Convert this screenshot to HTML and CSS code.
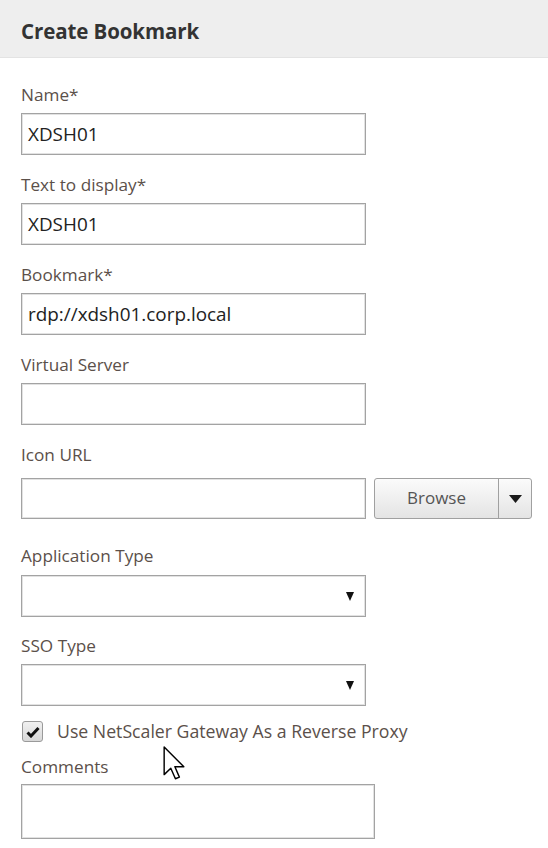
FILE: index.html
```html
<!DOCTYPE html>
<html>
<head>
<meta charset="utf-8">
<link rel="stylesheet" href="styles.css">
</head>
<body>
<div class="panel">
  <div class="header"><h1 class="title">Create Bookmark</h1></div>
  <div class="form">
    <div class="field">
      <div class="label">Name*</div>
      <div class="input">XDSH01</div>
    </div>
    <div class="field">
      <div class="label">Text to display*</div>
      <div class="input">XDSH01</div>
    </div>
    <div class="field">
      <div class="label">Bookmark*</div>
      <div class="input">rdp://xdsh01.corp.local</div>
    </div>
    <div class="field">
      <div class="label">Virtual Server</div>
      <div class="input"></div>
    </div>
    <div class="field field-icon">
      <div class="label label-wide">Icon URL</div>
      <div class="row">
        <div class="input"></div>
        <div class="split-btn">
          <span class="btn-main">Browse</span>
          <span class="btn-arrow"><svg width="13" height="8" viewBox="0 0 13 8"><polygon points="0,0 13,0 6.5,8" fill="#1a1a1a"/></svg></span>
        </div>
      </div>
    </div>
    <div class="field field-app">
      <div class="label">Application Type</div>
      <div class="input select"><svg class="caret" width="8" height="9" viewBox="0 0 8 9"><polygon points="0,0 8,0 4,9" fill="#111"/></svg></div>
    </div>
    <div class="field field-sso">
      <div class="label">SSO Type</div>
      <div class="input select"><svg class="caret" width="8" height="9" viewBox="0 0 8 9"><polygon points="0,0 8,0 4,9" fill="#111"/></svg></div>
    </div>
    <div class="check-row">
      <span class="checkbox"><svg width="14" height="12" viewBox="0 0 14 12"><path d="M1.5 6.5 L5 10 L12.5 2" fill="none" stroke="#111" stroke-width="3"/></svg></span>
      <span class="check-label">Use NetScaler Gateway As a Reverse Proxy</span>
    </div>
    <div class="field field-comments">
      <div class="label">Comments</div>
      <div class="input textarea"></div>
    </div>
  </div>
  <svg class="cursor" width="22" height="34" viewBox="0 0 12 19"><path d="M0.5 0.5 L0.5 16 L4.2 12.4 L6.8 18.3 L9 17.4 L6.5 11.6 L11.5 11.6 Z" fill="#fff" stroke="#000" stroke-width="0.8" stroke-linejoin="round"/></svg>
</div>
</body>
</html>
```
FILE: styles.css
```css
* { box-sizing: border-box; }
html, body { margin: 0; padding: 0; background: #fff; }
body { font-family: "Open Sans", "Noto Sans", sans-serif; width: 548px; height: 848px; overflow: hidden; }
.panel { position: relative; height: 848px; }
.header {
  height: 58px;
  background: #eeeeee;
  border-bottom: 1px solid #e3e3e3;
  display: flex;
  align-items: center;
  padding-left: 21px;
}
.title {
  margin: 0;
  font-size: 20.5px;
  font-weight: 700;
  color: #333;
  letter-spacing: -0.1px;
  padding-top: 5px;
}
.form {
  padding: 25px 0 0 21px;
  display: flex;
  flex-direction: column;
}
.field { display: flex; flex-direction: column; margin-bottom: 18px; }
.label {
  font-size: 17.2px;
  line-height: 24px;
  color: #5b504a;
  margin-bottom: 6px;
}
.label-wide { margin-bottom: 11px; }
.input {
  width: 345px;
  height: 42px;
  border: 1px solid #a3a3a3;
  box-shadow: inset 0 0 0 1px #e2e2e2;
  background: #fff;
  font-size: 18.9px;
  color: #222;
  line-height: 40px;
  padding-left: 6px;
  position: relative;
}
.row { display: flex; align-items: flex-start; gap: 8px; }
.row .input { height: 41px; }
.split-btn {
  display: flex;
  height: 41px;
  width: 158px;
  border: 1px solid #a0a0a0;
  border-radius: 3px;
  background: linear-gradient(#fbfbfb, #e4e4e4);
  overflow: hidden;
}
.btn-main {
  width: 124px;
  border-right: 1px solid #a0a0a0;
  display: flex;
  align-items: center;
  justify-content: center;
  font-size: 17px;
  color: #555;
  padding-bottom: 2px;
}
.btn-arrow {
  flex: 1;
  display: flex;
  align-items: center;
  justify-content: center;
}
.field-icon { margin-bottom: 25px; }
.field-app .label { margin-bottom: 7px; }
.field-app { margin-bottom: 17px; }
.field-sso .label { margin-bottom: 6px; }
.field-sso { margin-bottom: 15px; }
.select .caret { position: absolute; right: 11px; top: 16px; }
.check-row {
  display: flex;
  align-items: center;
  height: 21px;
  margin-left: 1px;
  gap: 14px;
}
.checkbox {
  width: 21px;
  height: 21px;
  border: 1px solid #9a9a9a;
  border-radius: 3px;
  background: linear-gradient(#f0f0f0, #d8d8d8);
  display: flex;
  align-items: center;
  justify-content: center;
}
.check-label {
  font-size: 17.7px;
  color: #5b504a;
  line-height: 24px;
  padding-bottom: 1px;
}
.field-comments { margin-top: 13px; }
.field-comments .label { margin-bottom: 5px; }
.textarea { width: 354px; height: 55px; }
.cursor { position: absolute; left: 163px; top: 746px; }
```
